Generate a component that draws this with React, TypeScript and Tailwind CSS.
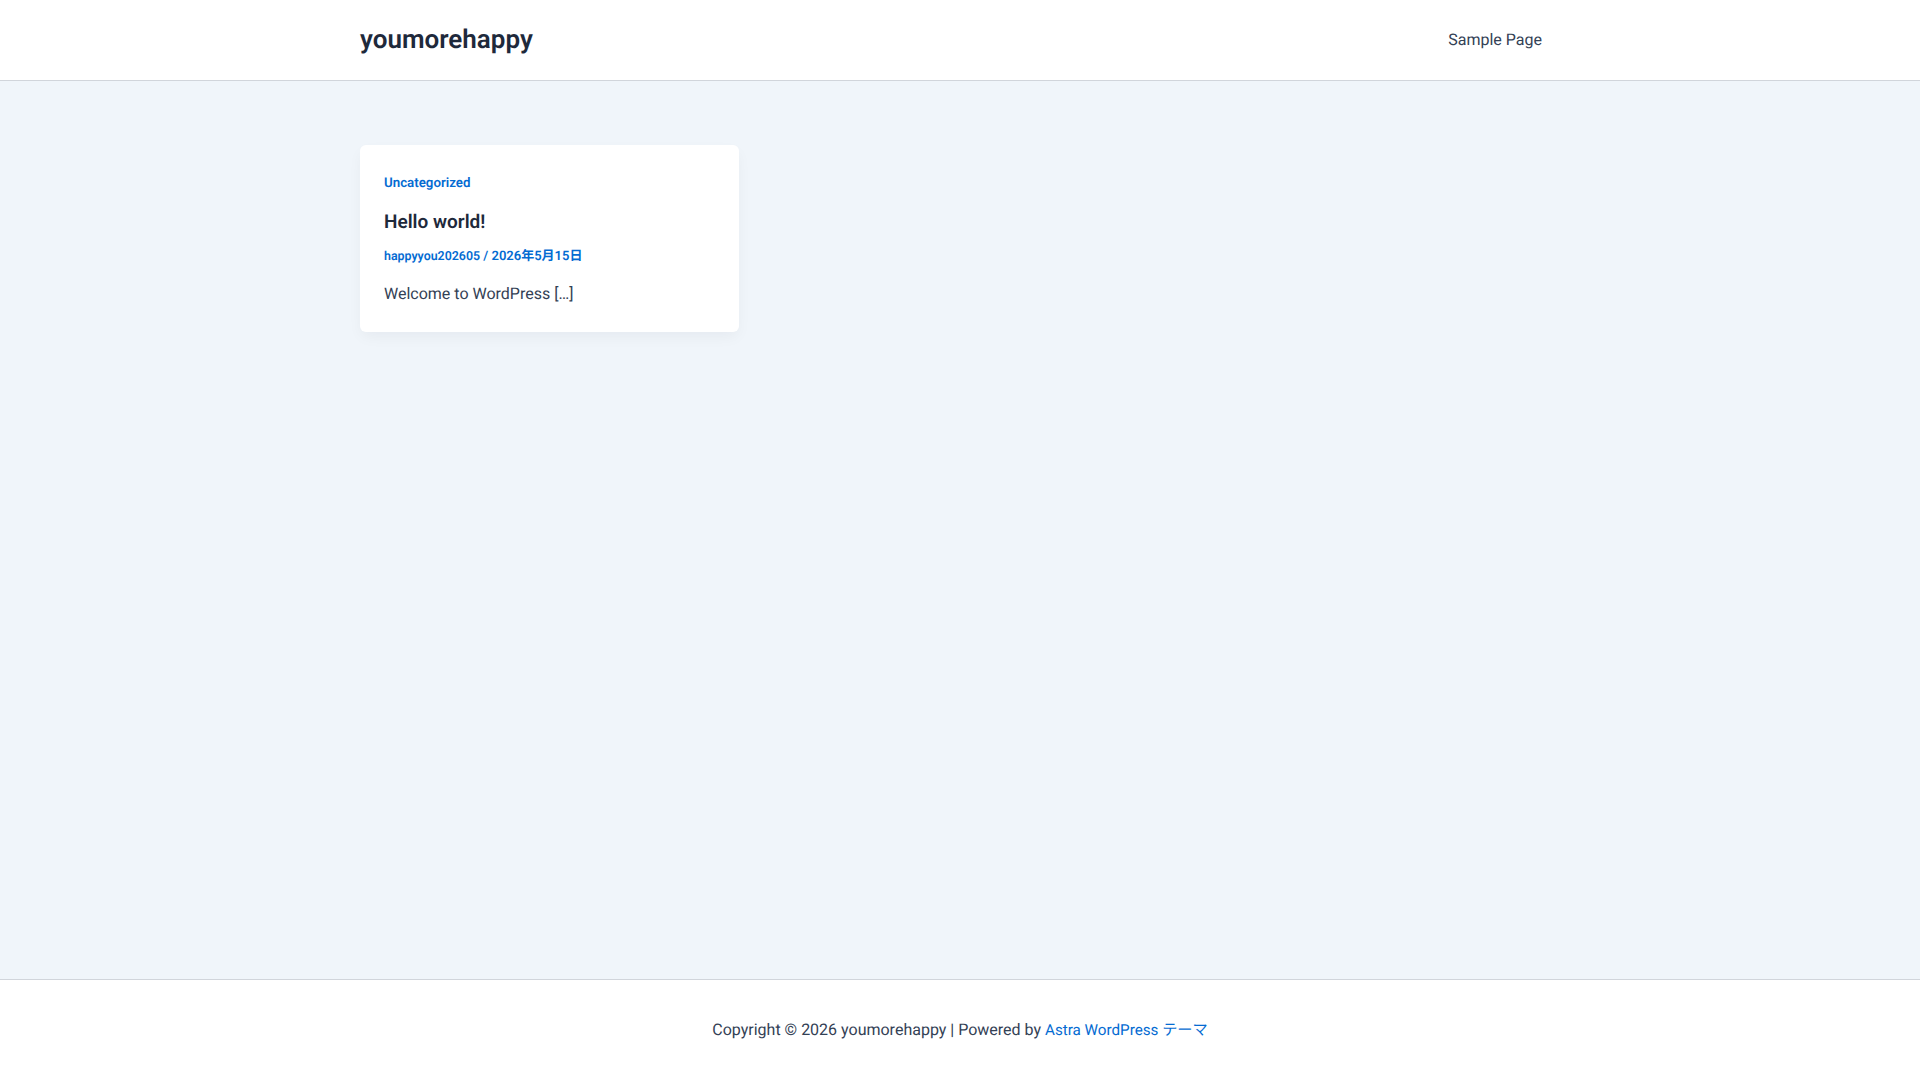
export default function App() {
  return (
    <div className="flex min-h-screen flex-col bg-[#f0f5fa] font-['Roboto','Noto_Sans_CJK_JP',sans-serif] text-base text-[#334155] [text-rendering:geometricPrecision]">
      {/* Header */}
      <header className="border-b border-[#d1d5db] bg-white">
        <div className="mx-auto flex h-20 w-[1200px] items-center justify-between">
          <a href="#" className="text-[26px] font-semibold leading-none text-[#1e293b]">youmorehappy</a>
          <a href="#" className="mr-[18px] text-base text-[#334155]">Sample Page</a>
        </div>
      </header>

      {/* Posts */}
      <main className="flex-1">
        <div className="mx-auto mt-16 w-[1200px]">
          <article className="flex w-[379px] flex-col rounded-md bg-white px-6 pb-[25px] pt-[29px] shadow-[0px_6px_15px_-2px_rgba(16,24,40,0.05)]">
            <a href="#" className="text-[13.3px] font-semibold leading-[20px] text-[#046bd2]">Uncategorized</a>
            <h2 className="mt-[14px] text-[19px] font-semibold leading-[28px] text-[#1e293b]">Hello world!</h2>
            <p className="mt-[11px] text-[13px] font-semibold leading-[20px] text-[#046bd2]">
              <a href="#" className="text-[12.4px]">happyyou202605</a> / 2026年5月15日
            </p>
            <p className="mt-[14px] leading-[26px]">Welcome to WordPress [&hellip;]</p>
          </article>
        </div>
      </main>

      {/* Footer */}
      <footer className="flex h-[101px] items-start justify-center border-t border-[#d1d5db] bg-white pt-[37px]">
        <p className="leading-[26px]">
          Copyright © 2026 youmorehappy | Powered by <a href="#" className="text-[15.2px] text-[#046bd2]">Astra WordPress テーマ</a>
        </p>
      </footer>
    </div>
  );
}
